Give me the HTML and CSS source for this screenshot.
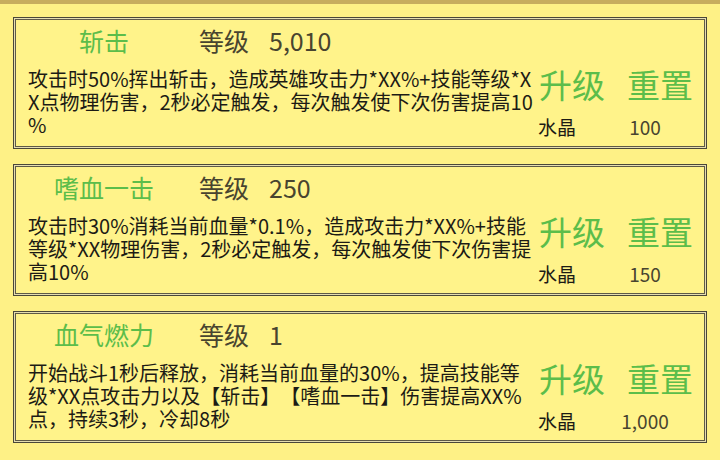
FILE: index.html
```html
<!DOCTYPE html>
<html>
<head>
<meta charset="utf-8">
<link rel="stylesheet" href="styles.css">
</head>
<body>
<div class="topbar"></div>
<div class="list">
  <div class="card">
    <div class="main">
      <div class="title-row">
        <span class="name">斩击</span>
        <span class="lvl-label">等级</span>
        <span class="lvl-value">5,010</span>
      </div>
      <div class="desc">
        <span class="line">攻击时50%挥出斩击，造成英雄攻击力*XX%+技能等级*X</span>
        <span class="line">X点物理伤害，2秒必定触发，每次触发使下次伤害提高10</span>
        <span class="line">%</span>
      </div>
    </div>
    <div class="side">
      <div class="btns"><span class="btn">升级</span><span class="btn">重置</span></div>
      <div class="cost"><span class="cost-label">水晶</span><span class="cost-value">100</span></div>
    </div>
  </div>
  <div class="card">
    <div class="main">
      <div class="title-row">
        <span class="name">嗜血一击</span>
        <span class="lvl-label">等级</span>
        <span class="lvl-value">250</span>
      </div>
      <div class="desc">
        <span class="line">攻击时30%消耗当前血量*0.1%，造成攻击力*XX%+技能</span>
        <span class="line">等级*XX物理伤害，2秒必定触发，每次触发使下次伤害提</span>
        <span class="line">高10%</span>
      </div>
    </div>
    <div class="side">
      <div class="btns"><span class="btn">升级</span><span class="btn">重置</span></div>
      <div class="cost"><span class="cost-label">水晶</span><span class="cost-value">150</span></div>
    </div>
  </div>
  <div class="card">
    <div class="main">
      <div class="title-row">
        <span class="name">血气燃力</span>
        <span class="lvl-label">等级</span>
        <span class="lvl-value">1</span>
      </div>
      <div class="desc">
        <span class="line">开始战斗1秒后释放，消耗当前血量的30%，提高技能等</span>
        <span class="line">级*XX点攻击力以及【斩击】【嗜血一击】伤害提高XX%</span>
        <span class="line">点，持续3秒，冷却8秒</span>
      </div>
    </div>
    <div class="side">
      <div class="btns"><span class="btn">升级</span><span class="btn">重置</span></div>
      <div class="cost"><span class="cost-label">水晶</span><span class="cost-value">1,000</span></div>
    </div>
  </div>
</div>
</body>
</html>
```
FILE: styles.css
```css
html, body {
  margin: 0;
  padding: 0;
}
body {
  width: 720px;
  height: 460px;
  overflow: hidden;
  background: #fef186;
  font-family: "Noto Sans CJK SC", "Noto Sans", sans-serif;
  color: #2b2a20;
  text-spacing-trim: space-all;
}
.topbar {
  height: 4px;
  background: #c7ad5e;
}
.list {
  display: flex;
  flex-direction: column;
  gap: 15px;
  padding: 13px 13px 0 13px;
}
.card {
  box-sizing: border-box;
  height: 132px;
  display: flex;
  background: #fff38a;
  border: 1px solid #4a4738;
  box-shadow: inset 0 0 0 1px #e6deb0, inset 0 0 0 2px #5e5a46;
  padding: 2px;
}
.main {
  flex: 1;
  display: flex;
  flex-direction: column;
}
.title-row {
  display: flex;
  align-items: center;
  height: 30px;
  margin-top: 5px;
  font-size: 25px;
  line-height: 30px;
}
.name {
  width: 176px;
  text-align: center;
  color: #5cbd4a;
}
.lvl-label {
  margin-left: 7px;
  color: #48442f;
}
.lvl-value {
  margin-left: 20px;
  color: #48442f;
}
.desc {
  margin-top: 12px;
  padding-left: 12px;
  font-size: 20px;
  line-height: 23px;
  color: #1c1b15;
}
.line {
  display: block;
  white-space: nowrap;
}
.side {
  width: 166px;
  display: flex;
  flex-direction: column;
  padding-top: 44px;
}
.btns {
  display: flex;
  gap: 22px;
  padding-left: 1px;
  height: 40px;
  line-height: 40px;
  font-size: 33px;
  color: #5cbd4a;
}
.cost {
  display: flex;
  margin-top: 11px;
  height: 24px;
  line-height: 24px;
  font-size: 19px;
}
.cost-label {
  width: 82px;
  color: #1c1b15;
}
.cost-value {
  width: 50px;
  text-align: center;
  color: #48442f;
}
```
